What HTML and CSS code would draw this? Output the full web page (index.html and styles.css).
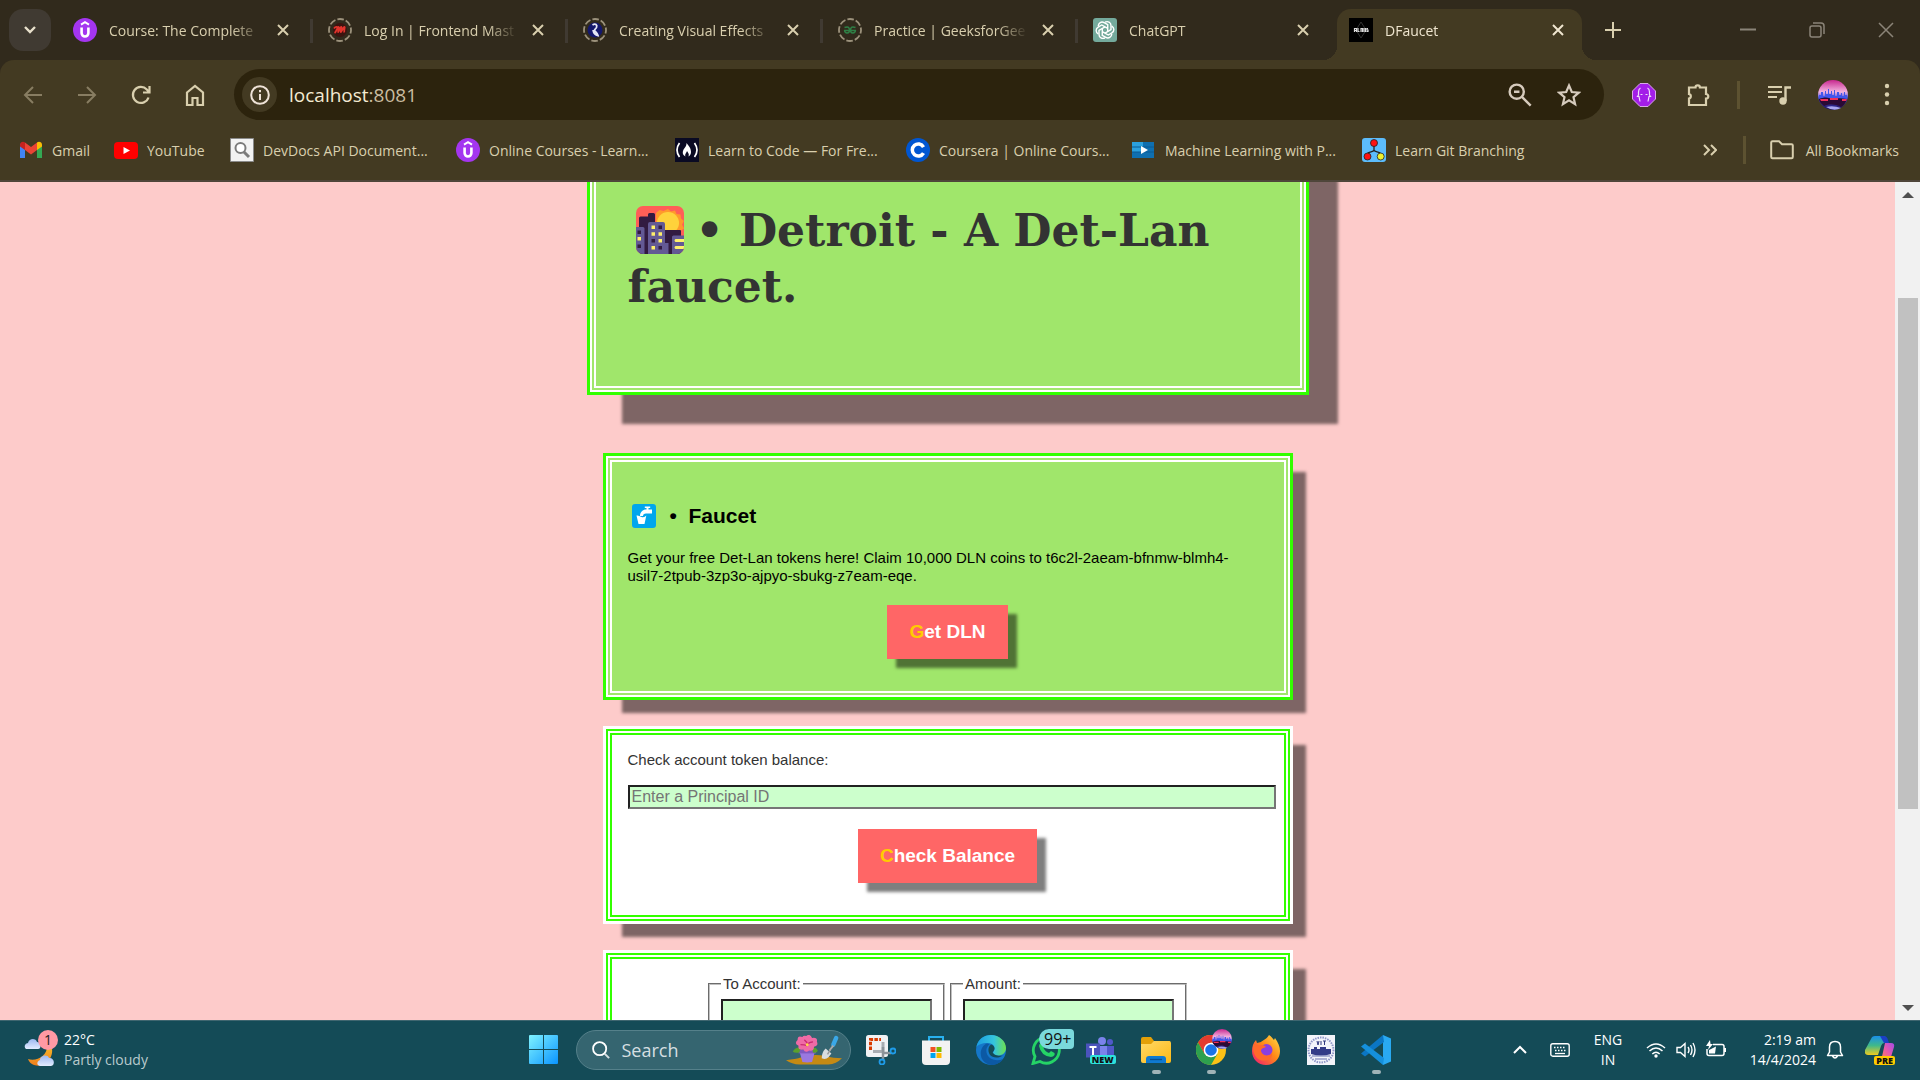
FILE: index.html
```html
<!DOCTYPE html>
<html lang="en">
<head>
<meta charset="utf-8">
<title>DFaucet</title>
<meta name="viewport" content="width=device-width, initial-scale=1">
<link rel="stylesheet" href="styles.css">
</head>
<body>
<svg class="defs" aria-hidden="true">
  <defs>
    <linearGradient id="g-win" x1="0" y1="0" x2="1" y2="1"><stop offset="0" stop-color="#7ff3ff"/><stop offset="1" stop-color="#0a94ff"/></linearGradient>
    <linearGradient id="g-sky" x1="0" y1="0" x2="0" y2="1"><stop offset="0" stop-color="#c8288f"/><stop offset=".4" stop-color="#f3b4e0"/><stop offset=".6" stop-color="#4a4fe0"/><stop offset="1" stop-color="#1a0a50"/></linearGradient>
    <linearGradient id="g-folder" x1="0" y1="0" x2="1" y2="1"><stop offset="0" stop-color="#ffd968"/><stop offset="1" stop-color="#fcb915"/></linearGradient>
    <linearGradient id="g-edge" x1="0" y1="0" x2="1" y2="0"><stop offset="0" stop-color="#1a9be0"/><stop offset=".6" stop-color="#35c5dd"/><stop offset="1" stop-color="#6ee04e"/></linearGradient>
    <linearGradient id="g-fox" x1="1" y1="0" x2="0" y2="1"><stop offset="0" stop-color="#ffe14a"/><stop offset=".45" stop-color="#ff8a16"/><stop offset="1" stop-color="#f0127a"/></linearGradient>
    <linearGradient id="g-cop1" x1="0" y1="0" x2="0" y2="1"><stop offset="0" stop-color="#1a8fe8"/><stop offset=".5" stop-color="#3fb98a"/><stop offset="1" stop-color="#f0cb1e"/></linearGradient>
    <linearGradient id="g-cop2" x1="1" y1="0" x2="0" y2="1"><stop offset="0" stop-color="#a24be8"/><stop offset=".5" stop-color="#e85aa8"/><stop offset="1" stop-color="#ff8a4a"/></linearGradient>
    <linearGradient id="g-moon" x1="0" y1="0" x2="0" y2="1"><stop offset="0" stop-color="#f9c22b"/><stop offset="1" stop-color="#ee7d1c"/></linearGradient>
    <linearGradient id="g-cloud" x1="0" y1="0" x2="0" y2="1"><stop offset="0" stop-color="#9db8f0"/><stop offset="1" stop-color="#e3ecff"/></linearGradient>
    <symbol id="i-udemy" viewBox="0 0 24 24"><circle cx="12" cy="12" r="12" fill="#a435f0"/><path d="M8 6.6 12 4.2l4 2.4" fill="none" stroke="#fff" stroke-width="2"/><path d="M8.6 9.5v5.6a3.4 3.4 0 0 0 6.800 0V9.500" fill="none" stroke="#fff" stroke-width="2.600"/></symbol>
    <symbol id="i-ring" viewBox="0 0 24 24"><circle cx="12" cy="12" r="11" fill="none" stroke="#9c927c" stroke-width="1.800" stroke-dasharray="6.600 2.040" stroke-dashoffset="3"/></symbol>
    <symbol id="i-x" viewBox="0 0 12 12"><path d="m1 1 10 10M11 1 1 11" fill="none" stroke="currentColor" stroke-width="2"/></symbol>
    <symbol id="i-skyline" viewBox="0 0 30 30"><circle cx="15" cy="15" r="15" fill="url(#g-sky)"/><path d="M1 19v-4h2v-3h2v4h2v-5h1v3h2V9h1v5h2v-3h1v4h2v-5h1v6h2v-4h2v3h2v-2h1v3h2v-4h1v3h2v4z" fill="#4256ec"/><path d="M1 19c5-2 9-2 13 0 5-1 10-1 15 0-1 4-4 7-6 8-6-3-11-3-17-1-2-2-5-4-5-7" fill="#2b0a35"/><path d="M2 19h8v2H3zM12 18h8v2h-8zM24 19h5l-1 2h-4z" fill="#f0305a"/><path d="M8 27q7-2 15 1-7 4-15-1" fill="#a9a6f0"/></symbol>
  </defs>
</svg>

<header class="browser">
  <div class="tabstrip">
    <button class="tab-search" aria-label="Search tabs"><svg viewBox="0 0 14 10"><path d="m2 2 5 5 5-5" fill="none" stroke="#e8e0cc" stroke-width="2.400"/></svg></button>
    <ul class="tabs">
      <li class="tab"><svg class="fav"><use href="#i-udemy"/></svg><span class="tab-title">Course: The Complete</span><button class="tab-close" aria-label="Close tab"><svg><use href="#i-x"/></svg></button></li>
      <li class="tab"><svg class="fav" viewBox="0 0 24 24"><use href="#i-ring"/><circle cx="12" cy="12" r="7" fill="#3d1410"/><path d="M6.500 15c2-1 2.500-6 4-6 .8 0-.6 5-.3 5s2-5 3-5-.8 5-.3 5 2.300-5 3.500-5c1 0-1 4 0 5.500M6 10.500c1-1.500 2-2 3.500-1.500" fill="none" stroke="#e2342c" stroke-width="1.800"/></svg><span class="tab-title">Log In | Frontend Mast</span><button class="tab-close" aria-label="Close tab"><svg><use href="#i-x"/></svg></button></li>
      <li class="tab"><svg class="fav" viewBox="0 0 24 24"><use href="#i-ring"/><circle cx="12" cy="12" r="7.500" fill="#14186c"/><path d="M9.500 7c3-2 5 0 4 2.500-.6 1.500-2 1.500-2 3 1 1.500 3 2.500 3.500 5-2.500-.5-4.500-3-5-5.500" fill="none" stroke="#e4e6f5" stroke-width="1.800"/></svg><span class="tab-title">Creating Visual Effects</span><button class="tab-close" aria-label="Close tab"><svg><use href="#i-x"/></svg></button></li>
      <li class="tab"><svg class="fav" viewBox="0 0 24 24"><use href="#i-ring"/><path d="M6 12.500h12M6.500 9.500c4-1.500 5 0 5 3s-4.500 3.500-5 0M17.500 9.500c-4-1.500-5 0-5 3s4.500 3.500 5 0" fill="none" stroke="#2f8046" stroke-width="1.500"/></svg><span class="tab-title">Practice | GeeksforGee</span><button class="tab-close" aria-label="Close tab"><svg><use href="#i-x"/></svg></button></li>
      <li class="tab tab-last"><svg class="fav" viewBox="0 0 24 24"><rect width="24" height="24" rx="3" fill="#74aa9c"/><g fill="none" stroke="#fff" stroke-width="1.400"><path id="petal" d="M12 4.200c2.800-1.500 6 .2 6 3.300v4.200l-6 3.400"/><use href="#petal" transform="rotate(60 12 12)"/><use href="#petal" transform="rotate(120 12 12)"/><use href="#petal" transform="rotate(180 12 12)"/><use href="#petal" transform="rotate(240 12 12)"/><use href="#petal" transform="rotate(300 12 12)"/></g></svg><span class="tab-title">ChatGPT</span><button class="tab-close" aria-label="Close tab"><svg><use href="#i-x"/></svg></button></li>
      <li class="tab tab-active"><svg class="fav" viewBox="0 0 24 24"><path d="M0 0h24v24H0z"/><path d="m12 4 5 8-5 8-5-8z" fill="none" stroke="#333"/><path d="M5.500 14v-3.500h2V14M5.500 12.500h2M9 10v3.500h1.500M12 14v-3.500h1.500V14M15 14v-4M16.500 14v-4M19 10.500h-1V12h1v1.500h-1.500" stroke="#ddd" stroke-width="1.200" fill="none"/></svg><span class="tab-title">DFaucet</span><button class="tab-close" aria-label="Close tab"><svg><use href="#i-x"/></svg></button></li>
    </ul>
    <button class="new-tab" aria-label="New tab"><svg viewBox="0 0 16 16"><path d="M8 0v16M0 8h16" stroke="#d9cfae" stroke-width="2"/></svg></button>
    <div class="window-controls">
      <button aria-label="Minimize"><svg viewBox="0 0 16 16"><path d="M0 7.500h16" stroke="currentColor" stroke-width="2"/></svg></button>
      <button aria-label="Restore"><svg viewBox="0 0 16 16"><rect x="1" y="4" width="11" height="11" rx="2" fill="none" stroke="currentColor" stroke-width="1.500"/><path d="M4 1h8a3 3 0 0 1 3 3v8" fill="none" stroke="currentColor" stroke-width="1.500"/></svg></button>
      <button aria-label="Close"><svg viewBox="0 0 16 16"><path d="m1 1 14 14M15 1 1 15" stroke="currentColor" stroke-width="1.500"/></svg></button>
    </div>
  </div>

  <div class="toolbar">
    <button class="tool dim" aria-label="Back"><svg viewBox="0 0 20 20"><path d="M19 10H2M10 2l-8 8 8 8" fill="none" stroke="currentColor" stroke-width="2"/></svg></button>
    <button class="tool dim" aria-label="Forward"><svg viewBox="0 0 20 20"><path d="M1 10h17M10 2l8 8-8 8" fill="none" stroke="currentColor" stroke-width="2"/></svg></button>
    <button class="tool" aria-label="Reload"><svg viewBox="0 0 20 20"><path d="M17.500 12.500A8 8 0 1 1 15.800 4.500L18 7M18.500 1v6.500H12" fill="none" stroke="currentColor" stroke-width="2.200"/></svg></button>
    <button class="tool" aria-label="Home"><svg viewBox="0 0 20 22"><path d="M2 8.500 10 2l8 6.500V21h-5.500v-7h-5v7H2z" fill="none" stroke="currentColor" stroke-width="2.200"/></svg></button>
    <div class="omnibox">
      <button class="site-info" aria-label="View site information"><svg viewBox="0 0 20 20"><circle cx="10" cy="10" r="8.800" fill="none" stroke="currentColor" stroke-width="2"/><path d="M10 9v6M10 5v2.200" stroke="currentColor" stroke-width="2"/></svg></button>
      <span class="address"><span class="host">localhost</span>:8081</span>
      <button class="omni-icon" aria-label="Zoom"><svg viewBox="0 0 22 22"><circle cx="8" cy="8" r="6.500" fill="none" stroke="currentColor" stroke-width="2.200"/><path d="m12.800 12.800 8 8M5.500 8h5" stroke="currentColor" stroke-width="2.200"/></svg></button>
      <button class="omni-icon" aria-label="Bookmark this tab"><svg viewBox="0 0 24 24"><path d="m12 2.500 2.800 6.500 7 .6-5.300 4.600 1.600 6.900-6.100-3.700-6.100 3.700 1.600-6.900L2.200 9.600l7-.6z" fill="none" stroke="currentColor" stroke-width="2.200"/></svg></button>
    </div>
    <button class="tool tool-first" aria-label="Extension"><svg viewBox="0 0 24 24"><path d="M8 .5h8L23.500 8v8L16 23.500H8L.5 16V8z" fill="#a31de8" stroke="#d9a6e8"/><path d="M8.500 5q-2 1-2 4v3l-1 1.500h1.500l1 5M15.500 5q2 1 2 4v3l1 1.500H17l-1 5M8.500 11.500h2M13.500 11.500h2" fill="none" stroke="#f0dcfa" stroke-width="1.200"/></svg></button>
    <button class="tool" aria-label="Extensions"><svg viewBox="0 0 24 24"><path d="M3 4.500h6.500a2.200 2.200 0 0 1 4.400 0H20V11a2.300 2.300 0 0 1 0 4.600V22H3v-6.500a2.300 2.300 0 0 0 0-4.500z" fill="none" stroke="currentColor" stroke-width="2.200"/></svg></button>
    <span class="tool-divider"></span>
    <button class="tool" aria-label="Media controls"><svg viewBox="0 0 24 24"><path d="M1 4h14M1 9h14M1 14h9" stroke="currentColor" stroke-width="2.200"/><path d="M18.500 18V4.500H24" fill="none" stroke="currentColor" stroke-width="2.400"/><circle cx="16" cy="18" r="3.700" fill="currentColor"/></svg></button>
    <button class="tool avatar" aria-label="Profile"><svg><use href="#i-skyline"/></svg></button>
    <button class="tool" aria-label="Menu"><svg viewBox="0 0 24 24" fill="currentColor"><circle cx="12" cy="3" r="2.200"/><circle cx="12" cy="11.500" r="2.200"/><circle cx="12" cy="20" r="2.200"/></svg></button>
  </div>

  <nav class="bookmarks" aria-label="Bookmarks">
    <div class="bookmark-grid">
      <a href="#"><svg class="fav" viewBox="0 0 24 24"><path d="M1 5.500V20h5v-9z" fill="#4285f4"/><path d="M23 5.500V20h-5v-9z" fill="#34a853"/><path d="M1 7c0-3 3-4 5-2.500V12L1 8.500z" fill="#c5221f"/><path d="M23 7c0-3-3-4-5-2.500V12l5-3.500z" fill="#fbbc04"/><path d="M6 4.500 12 9l6-4.500V12l-6 4.500L6 12z" fill="#ea4335"/></svg>Gmail</a>
      <a href="#"><svg class="fav" viewBox="0 0 24 24"><rect y="4" width="24" height="17" rx="4" fill="#f00"/><path d="m9.500 9 6.500 3.500L9.500 16z" fill="#fff"/></svg>YouTube</a>
      <a href="#"><svg class="fav" viewBox="0 0 24 24"><path d="M.5.5h23v23H.5z" fill="#f2f2f2" stroke="#8a8a8a"/><circle cx="10.500" cy="10" r="5" fill="#fff" stroke="#7b7b7b" stroke-width="2"/><path d="m14 14 5 5" stroke="#7b7b7b" stroke-width="3"/></svg>DevDocs API Document...</a>
      <a href="#"><svg class="fav"><use href="#i-udemy"/></svg>Online Courses - Learn...</a>
      <a href="#"><svg class="fav" viewBox="0 0 24 24"><path d="M0 0h24v24H0z" fill="#0a0a23"/><path d="M4.500 5q-5 7 0 14M19.500 5q5 7 0 14" fill="none" stroke="#fff" stroke-width="1.700"/><path d="M11.500 5c2 2.500 4.500 5 4.500 9 0 2-1 3.500-2.500 4.500 1-2.500-.5-3.500-1.500-5.500-.5 2-2.500 3-1.500 5.500C6 16 8 12 10 9.500c1-1.500 1.500-2.500 1.500-4.500" fill="#fff"/></svg>Learn to Code — For Fre...</a>
      <a href="#"><svg class="fav" viewBox="0 0 24 24"><circle cx="12" cy="12" r="12" fill="#0056d2"/><path d="M17.500 9a6 6 0 1 0 0 6" fill="none" stroke="#fff" stroke-width="3.500"/></svg>Coursera | Online Cours...</a>
      <a href="#"><svg class="fav" viewBox="0 0 24 24"><path d="M0 4h22v16H0z" fill="#0f6fb0"/><path d="M0 4h11v10H0z" fill="#2ba0dd"/><path d="M0 9h22M0 14h22" stroke="#0b5a94"/><path d="m9 8 7 4-7 4z" fill="#fff"/></svg>Machine Learning with P...</a>
      <a href="#"><svg class="fav" viewBox="0 0 24 24"><rect width="24" height="24" rx="3" fill="#5cbcfc"/><path d="M12 8v4M5.500 16c0-3 6.500-1.500 6.500-4 0 2.500 6.500 1 6.500 4" fill="none" stroke="#222" stroke-width="1.300"/><circle cx="12" cy="5" r="3.500" fill="#f11" stroke="#222" stroke-width=".8"/><circle cx="5.500" cy="18.500" r="3.500" fill="#f11" stroke="#222" stroke-width=".8"/><circle cx="18.700" cy="18.500" r="3.500" fill="#eef02c" stroke="#222" stroke-width=".8"/></svg>Learn Git Branching</a>
    </div>
    <button class="more" aria-label="More bookmarks"><svg viewBox="0 0 14 12"><path d="m1 1 5 5-5 5M8 1l5 5-5 5" fill="none" stroke="currentColor" stroke-width="2"/></svg></button>
    <span class="tool-divider"></span>
    <a class="all-bookmarks" href="#"><svg class="fav" viewBox="0 0 24 24"><path d="M1.200 4.500q0-1.300 1.300-1.300H9l3 3h9.500q1.300 0 1.300 1.300v11.500q0 1.300-1.300 1.300h-19q-1.300 0-1.300-1.300z" fill="none" stroke="currentColor" stroke-width="2"/></svg>All Bookmarks</a>
  </nav>
</header>

<div class="viewport">
  <main class="page">
    <header class="hero">
      <h1><svg class="hero-icon" viewBox="0 0 48 48"><defs><clipPath id="city"><rect width="48" height="48" rx="7"/></clipPath></defs><g clip-path="url(#city)"><path d="M0 0h48v48H0z" fill="#ff5f57"/><path d="m32 3 3 2.500 4-1 1.500 3.500 4 .5.500 4 3 2.500-2 3.500 2 4-3 2H20V7l3.500-3 4 1z" fill="#ff9a2b"/><circle cx="32" cy="17" r="11" fill="#ffd23b"/><path d="M3 12q0-1.500 1.500-1.500H12V8.500q0-1.500 1.500-1.500h4q1.500 0 1.500 1.500V48H3z" fill="#321b41"/><path d="M28 25q0-1 1-1h15q1 0 1 1v23H28z" fill="#321b41"/><path d="M0 21h7q1.500 0 1.500 1.500V48H0zM12 18q0-2 2-2h13q2 0 2 2v19h3.500v11H12zM36 31q0-1.500 1.500-1.500H48V48H36z" fill="#635994"/><path d="M15.500 19.500h3.500V23h-3.500zM15.500 26.300h3.500v3.500h-3.500zM22.500 26.300H26v3.500h-3.500zM22.500 33H26v3.500h-3.500zM15.500 40h3.500v3.500h-3.500zM1.500 31H5v3.500H1.500zM39.500 33H48v3h-8.500q-2-1.500 0-3zM39.500 40H48v3h-8.500q-2-1.500 0-3z" fill="#ffef6b"/><path d="M22.500 19.500H26V23h-3.500zM15.500 33h3.500v3.500h-3.500zM22.500 40H26v3.500h-3.500zM1.500 24.500H5V28H1.500zM1.500 38.500H5V42H1.500z" fill="#321b41"/></g></svg>• Detroit - A Det-Lan faucet.</h1>
    </header>

    <section class="card card-green">
      <h2><svg class="title-icon" viewBox="0 0 24 24"><rect width="24" height="24" rx="3" fill="#00a6ed"/><path d="M8 12c0-4 3-6.500 6-6.500h.5V4h-1.700V2.500h5.400V4h-1.700v1.500H20v4h-6q-3 0-3 2.500z" fill="#fff"/><path d="m4.500 11.500 2 8.500h6l1.800-8.500q-2 2.500-4.800 1.500-3-2-5-1.500" fill="#fff"/></svg>•&nbsp; Faucet</h2>
      <p>Get your free Det-Lan tokens here! Claim 10,000 DLN coins to t6c2l-2aeam-bfnmw-blmh4-usil7-2tpub-3zp3o-ajpyo-sbukg-z7eam-eqe.</p>
      <button class="action">Get DLN</button>
    </section>

    <section class="card card-white">
      <label for="principal">Check account token balance:</label>
      <input id="principal" class="field" type="text" placeholder="Enter a Principal ID">
      <button class="action">Check Balance</button>
    </section>

    <section class="card card-white transfer">
      <div class="pair">
        <fieldset><legend><label for="to">To Account:</label></legend><input id="to" class="field" type="text"></fieldset>
        <fieldset><legend><label for="amount">Amount:</label></legend><input id="amount" class="field" type="text"></fieldset>
      </div>
    </section>
  </main>
  <div class="scrollbar" aria-hidden="true">
    <span class="arrow arrow-up"></span>
    <span class="thumb"></span>
    <span class="arrow arrow-down"></span>
  </div>
</div>

<footer class="taskbar">
  <button class="weather">
    <svg viewBox="0 0 34 38"><path d="M2 18c-3-3 0-6 2-6 1-5 8-5 9-1 4 0 5 7 1 7z" fill="url(#g-cloud)"/><path d="M26 12c7 12-4 26-16 22-3-1-5-3-6-6 8 3 20-3 19-14z" fill="url(#g-moon)"/><path d="M16 35c-4-1-3-5 0-6 0-5 8-6 9-2 5-1 7 7 2 8z" fill="url(#g-cloud)"/><circle cx="24" cy="9" r="10" fill="#ff99a4"/><text x="24" y="14" class="badge-num">1</text></svg>
    <span class="weather-text"><span>22°C</span><span class="soft">Partly cloudy</span></span>
  </button>

  <div class="apps">
    <button class="app" aria-label="Start"><svg viewBox="0 0 30 30"><path d="M0 1q0-1 1-1h13v14H0zM15 0h13q1 0 1 1v13H15zM0 15h14v14H1q-1 0-1-1zM15 15h14v13q0 1-1 1H15z" fill="url(#g-win)"/></svg></button>
    <button class="search">
      <svg class="lens" viewBox="0 0 20 20"><circle cx="8.500" cy="8.500" r="7.300" fill="none" stroke="#fff" stroke-width="2"/><path d="m14 14 5 5" stroke="#d5dfe2" stroke-width="2.200"/></svg>
      <span>Search</span>
      <svg class="flower" viewBox="0 0 58 32"><path d="M0 26q10-1 16-3 13-4 25-1 8 2 17 2-6 6-14 6.500H14Q6 30 0 26" fill="#c58a14"/><path d="M14 17h16l-3 11q-5 1-10 0z" fill="#9a78e0"/><path d="M13 15h18v4H13z" fill="#7e58c0"/><path d="M14 18q-5 1-7-1 3-5 8-4zM28 18q4 1 5-2-2-4-6-3z" fill="#5aa02c"/><path d="M21 1q4-3 6 2 6-1 5 4 2 4-3 5 0 5-5 4-4 3-6-1-6 1-5-4-5-2-1-6 0-5 5-3 1-2 4-1" fill="#f06ba6"/><path d="M19 5q3 2 3 5 2-3 6-3M15 10q4 0 7 1" stroke="#c92a72" fill="none" stroke-width="1.300"/><circle cx="22" cy="10" r="1.500" fill="#ffd84a"/><path d="m41 14 6 5-3 4q-3 3-7 1 0-6 4-10" fill="#d9dde0"/><path d="m46 15-3 5" stroke="#999" stroke-width="1.500"/><path d="m49 10 3-7" stroke="#3aa8e8" stroke-width="4.500" stroke-linecap="round"/><path d="m45 16 4-5" stroke="#aaa" stroke-width="2"/></svg>
    </button>
    <button class="app" aria-label="Snipping Tool"><svg viewBox="0 0 30 30"><rect width="22" height="22" rx="2.500" fill="#f1f2f4"/><path d="M4.500 15V4.500H15" fill="none" stroke="#d83b01" stroke-width="3" stroke-dasharray="3.500 1.300"/><path d="M7 16.500h10V7" fill="none" stroke="#a9adb2" stroke-width="3"/><path d="M17 12v13M16 18h9" stroke="#8d9399" stroke-width="2.500"/><circle cx="27" cy="16" r="2.500" fill="none" stroke="#1f9be8" stroke-width="1.800"/><circle cx="16" cy="27" r="2.500" fill="none" stroke="#1f9be8" stroke-width="1.800"/></svg></button>
    <button class="app" aria-label="Microsoft Store"><svg viewBox="0 0 30 30"><path d="M8 7V2h14v5" fill="none" stroke="#28b0ee" stroke-width="2"/><path d="M1 5.500h28V26q0 4-4 4H5q-4 0-4-4z" fill="#f2f2f2"/><path d="M9.500 12h5v5h-5z" fill="#f25022"/><path d="M15.500 12h5v5h-5z" fill="#7fba00"/><path d="M9.500 18h5v5h-5z" fill="#00a4ef"/><path d="M15.500 18h5v5h-5z" fill="#ffb900"/></svg></button>
    <button class="app" aria-label="Edge"><svg viewBox="0 0 30 30"><circle cx="15" cy="15" r="15" fill="#1577c9"/><path d="M.3 12C2 4 8 0 15 0c8 0 15 6 15 13 0 5-4 7.500-8 7.500-3 0-5-1-5-2.500 0-1 1.500-2 1.500-4.500C18.500 9.500 15 8 11 8 6 8 2 10 .3 12" fill="url(#g-edge)"/><path d="M11 8.500C3 11 1 27 15 30c5 .3 10-2.500 12-6-8 3.500-18-1-16.500-10 .5-2 1.500-3.500 3-4.500-1-.7-1.700-1-2.500-1" fill="#0c59a4"/><path d="M17 18c-1-1 1.500-2 1.500-4.500 0-2-1.500-3.500-3.500-4-4 3-3 10 1 12 4 2 8 1 11-1-2 .5-7 1-10-2.500" fill="#144b57"/></svg></button>
    <button class="app" aria-label="WhatsApp"><svg viewBox="0 0 30 30"><path d="M2 28.500 4 21.500a13 13 0 1 1 5 5z" fill="none" stroke="#25d366" stroke-width="2.800"/><path d="M10 8q2-1.500 3 1l1 2-1.500 2q2 4 5.500 5l2-2 3.500 2q1 3-3.500 4-10-1-12-11 0-2 2-3" fill="#25d366"/></svg><span class="badge">99+</span></button>
    <button class="app" aria-label="Teams"><svg viewBox="0 0 30 30"><circle cx="16" cy="6" r="4" fill="#7b83eb"/><circle cx="24" cy="7" r="3" fill="#5059c9"/><path d="M20 11h8v8q0 4-4 4h-4z" fill="#5059c9"/><path d="M9 11h12v11q-2 5-7 5-5-1-5-5z" fill="#7b83eb"/><path d="M0 8.500h14v14H0z" fill="#4b53bc"/><path d="M3.500 12h7M7 12v8" stroke="#fff" stroke-width="2"/></svg><span class="tag tag-new">NEW</span></button>
    <button class="app running" aria-label="File Explorer"><svg viewBox="0 0 30 30"><path d="M0 4q0-2 2-2h8l3 4h16v8H0z" fill="#e3a008"/><path d="M0 9h10l3-3h15q2 0 2 2v18q0 2-2 2H2q-2 0-2-2z" fill="url(#g-folder)"/><path d="M5 28v-4q0-3 3-3h14q3 0 3 3v4z" fill="#0f7ad1"/><path d="M9 24.500h12" stroke="#0a4f90" stroke-width="1.300"/></svg></button>
    <button class="app running" aria-label="Chrome"><svg viewBox="0 0 30 30"><circle cx="15" cy="15" r="15" fill="#fbc116"/><path d="M2 7.500A15 15 0 0 1 28 7.500H15L8.500 19z" fill="#e33b2e"/><path d="M2 7.500A15 15 0 0 0 15 30l6.500-11.300H8.500z" fill="#2da04e"/><circle cx="15" cy="15" r="7.300" fill="#fff"/><circle cx="15" cy="15" r="5.800" fill="#1a73e8"/></svg><svg class="profile"><use href="#i-skyline"/></svg></button>
    <button class="app" aria-label="Firefox"><svg viewBox="0 0 30 30"><path d="M18 0c3 2 4 4 5 5l1-2c3 4 5 9 5 13 0 8-6 14-14 14S1 24 1 16C1 12 2 8 5 5l1 3 4-1c2-2 6-3 8-7" fill="url(#g-fox)"/><circle cx="15.500" cy="15" r="6" fill="#8a3fe0"/><path d="M2 10c4-1 5 1 9 0 2 0 3 1 4 2-2 1-5 1-5 4 1 5 8 6 11 2 1 6-6 9-12 7-6-3-7-9-7-15" fill="#ff6a2a"/></svg></button>
    <button class="app" aria-label="College portal"><svg viewBox="0 0 30 30"><path d="M1 0h28v30H1z" fill="#f3f4fa"/><circle cx="15" cy="15" r="12.500" fill="none" stroke="#8f96c8" stroke-width="2" stroke-dasharray="1.500 1"/><path d="M11 6l1 4 1-4M15 6v4M17 6h3M18.500 6v4" stroke="#30387f" fill="none"/><path d="M5 14h3v-2h3v2h3v-2h6v2h5v5q-10 3-20 0z" fill="#333b88"/><path d="M6 21h18M9 24h12" stroke="#6870b0"/></svg></button>
    <button class="app running" aria-label="Visual Studio Code"><svg viewBox="0 0 30 30"><path d="m22 0 8 3.500v23L22 30z" fill="#29a9f2"/><path d="m22 0 1 7L4 21.500 0 18.500z" fill="#0b76c4"/><path d="m22 30 1-7L4 8.500 0 11.500z" fill="#1590dc"/></svg></button>
  </div>

  <div class="tray">
    <svg class="chev" viewBox="0 0 14 14"><path d="m1 10 6-6 6 6" fill="none" stroke="#fff" stroke-width="2"/></svg>
    <svg class="kbd" viewBox="0 0 20 16"><rect x=".8" y="1.800" width="18.400" height="12.400" rx="2" fill="none" stroke="#fff" stroke-width="1.400"/><path d="M4 5.500h12M5 8.500h11" stroke="#fff" stroke-width="1.500" stroke-dasharray="1.500 1.500"/><path d="M5 11.500h10" stroke="#fff" stroke-width="1.300"/></svg>
    <span class="lang"><span>ENG</span><span>IN</span></span>
    <span class="status">
      <svg viewBox="0 0 20 20"><path d="M1 8q9-8 18 0M3.500 11q6.500-6 13 0M6.300 14q3.700-3.500 7.400 0" fill="none" stroke="#fff" stroke-width="1.500"/><circle cx="10" cy="16" r="1.700" fill="#fff"/></svg>
      <svg viewBox="0 0 20 20"><path d="M1 7.500h3.500L9 3.500v13L4.500 12.500H1z" fill="none" stroke="#fff" stroke-width="1.400"/><path d="M12 7q2 3 0 6M14.500 5q3 5 0 10M17 3q4 7 0 14" fill="none" stroke="#fff" stroke-width="1.400"/></svg>
      <svg viewBox="0 0 20 20"><path d="M7 4.500h9q2 0 2 2v7q0 2-2 2H3q-2 0-2-2V9" fill="none" stroke="#fff" stroke-width="1.500"/><path d="M3 13.500V10l7-3.500-1 7zM18 8h2v4h-2zM4 0 0 6h3L2 10l5-6H4.500z" fill="#fff"/></svg>
    </span>
    <span class="clock"><span>2:19 am</span><span>14/4/2024</span></span>
    <svg class="bell" viewBox="0 0 18 20"><path d="M1.500 15.500 3.500 12V7q0-5.500 5.500-5.500T14.500 7v5l2 3.500zM6.500 16q2.500 4 5 0" fill="none" stroke="#fff" stroke-width="1.500" stroke-linejoin="round"/></svg>
    <span class="copilot"><svg viewBox="0 0 30 30"><path d="M6 4q1-3 4-3h8q3 0 4 4l1 3h-4q-2 0-3 3l-3 9H3q-4 0-3-5z" fill="url(#g-cop1)"/><path d="M15 1h4q3 0 4 4l1 3h-5z" fill="#1b3fc4"/><path d="M20 8h6q4 0 3 4l-3 10q-1 4-4 4h-6z" fill="url(#g-cop2)"/></svg><span class="tag tag-pre">PRE</span></span>
  </div>
</footer>
</body>
</html>
```
FILE: styles.css
```css
* { box-sizing: border-box; }

body {
  margin: 0;
  height: 100vh;
  display: flex;
  flex-direction: column;
  overflow: hidden;
  font-family: "Open Sans", "Noto Sans", sans-serif;
  font-size: 14px;
}

button {
  border: 0;
  padding: 0;
  background: none;
  color: inherit;
  font: inherit;
}

a { color: inherit; text-decoration: none; }
svg { display: block; flex: none; }
.defs { position: absolute; width: 0; height: 0; }
.fav { width: 24px; height: 24px; }

/* Browser frame */
.browser {
  flex: none;
  background: #312a1c;
  color: #d9cfae;
  border-bottom: 2px solid #4f463a;
}

.tabstrip {
  display: flex;
  align-items: center;
  height: 60px;
  padding-left: 9px;
}

.tab-search {
  display: grid;
  place-items: center;
  flex: none;
  width: 42px;
  height: 42px;
  border-radius: 14px;
  background: #403a32;
}
.tab-search svg { width: 14px; height: 10px; }

.tabs {
  display: flex;
  flex: 0 1 1530px;
  min-width: 0;
  margin: 0 0 0 6px;
  padding: 0;
  list-style: none;
}

.tab {
  position: relative;
  display: flex;
  flex: 0 1 255px;
  align-items: center;
  min-width: 0;
  height: 60px;
  padding: 0 17px 0 16px;
}
.tab::after {
  content: "";
  position: absolute;
  right: -1px;
  top: 19px;
  width: 3px;
  height: 24px;
  background: #403a32;
}
.tab-last::after { display: none; }

.tab-title {
  flex: 1;
  min-width: 0;
  margin: 0 8px 0 12px;
  overflow: hidden;
  white-space: nowrap;
  mask-image: linear-gradient(90deg, #000 80%, transparent);
}

.tab-close {
  display: grid;
  place-items: center;
  width: 24px;
  height: 24px;
}
.tab-close svg { width: 12px; height: 12px; }

.tab-active {
  flex-basis: 245px;
  height: 51px;
  margin: 9px 5px 0;
  padding: 0 12px 9px;
  border-radius: 14px 14px 0 0;
  background: #433a22;
  color: #efe5cf;
}
.tab-active::before,
.tab-active::after {
  content: "";
  display: block;
  position: absolute;
  top: auto;
  bottom: 0;
  width: 14px;
  height: 14px;
}
.tab-active::before {
  left: -14px;
  background: radial-gradient(circle at 0 0, transparent 14px, #433a22 14px);
}
.tab-active::after {
  right: -14px;
  background: radial-gradient(circle at 100% 0, transparent 14px, #433a22 14px);
}

.new-tab { display: grid; place-items: center; width: 52px; height: 52px; }
.new-tab svg { width: 16px; height: 16px; }

.window-controls { display: flex; margin-left: auto; color: #8b8478; }
.window-controls button { display: grid; place-items: center; width: 69px; height: 58px; }
.window-controls svg { width: 16px; height: 16px; }

.toolbar {
  display: flex;
  align-items: center;
  height: 69px;
  padding: 0 6px;
  border-radius: 14px 14px 0 0;
  background: #433a22;
}
.tool { display: grid; place-items: center; flex: none; width: 54px; height: 44px; }
.tool svg { width: 20px; height: 22px; }
.tool-first { margin-left: 13px; }
.tool-first svg, .tool-first ~ .tool svg { width: 24px; height: 24px; }
.toolbar .avatar svg { width: 30px; height: 30px; }
.dim { color: #887d62; }
.tool-divider { flex: none; width: 3px; height: 28px; margin: 0 12px; background: #5d5231; }

.omnibox {
  display: flex;
  flex: 1;
  align-items: center;
  min-width: 0;
  height: 51px;
  margin-left: 12px;
  padding: 0 23px 0 8px;
  border-radius: 26px;
  background: #2c230d;
  color: #d6cbbd;
}
.site-info {
  display: grid;
  place-items: center;
  width: 35px;
  height: 35px;
  border-radius: 50%;
  background: #433a22;
  color: #efe3d8;
}
.site-info svg { width: 20px; height: 20px; }
.address { flex: 1; margin-left: 12px; font-size: 19px; color: #c9bca0; }
.host { color: #f3ead2; }
.omni-icon { display: grid; place-items: center; margin-left: 25px; }
.omni-icon svg { width: 24px; height: 24px; }

.bookmarks {
  display: flex;
  align-items: center;
  height: 51px;
  padding: 0 21px 9px 19px;
  background: #433a22;
  white-space: nowrap;
}
.bookmarks a { display: flex; align-items: center; gap: 9px; }
.bookmark-grid {
  display: grid;
  flex: 1;
  grid-template-columns: 95px 116px 226px 219px 231px 226px 230px auto;
  min-width: 0;
}
.more { margin-right: 14px; }
.more svg { width: 14px; height: 12px; }
.bookmarks .all-bookmarks { gap: 12px; margin-left: 12px; }

/* Page */
.viewport {
  display: flex;
  flex: 1;
  min-height: 0;
  overflow: hidden;
  background: #fdcbca;
  font-family: "Liberation Sans", Arial, sans-serif;
}

.page {
  flex: 1;
  margin-top: -40px;
  color: #333;
  font-size: 15px;
  line-height: 18px;
}

.hero {
  width: 716px;
  margin: 0 auto 64px;
  padding: 55px 32px 71px;
  border: 6px double #fff;
  outline: 3px solid #3f0;
  background: #a0e66b;
  box-shadow: 32px 32px 3px rgba(0, 0, 0, .5);
}
.hero h1 {
  margin: 0;
  font: bold 44px/56px Georgia, "DejaVu Serif", serif;
}
.hero-icon {
  display: inline-block;
  width: 48px;
  height: 48px;
  margin: 0 12px 0 8px;
  vertical-align: -8px;
}

.card {
  display: flex;
  flex-direction: column;
  align-items: flex-start;
  width: 684px;
  margin: 0 auto 32px;
  padding: 16px;
  border: 6px double;
  box-shadow: 16px 16px 3px rgba(0, 0, 0, .5);
}
.card-green {
  border-color: #fff;
  outline: 3px solid #3f0;
  background: #a0e66b;
  color: #000;
}
.card-white {
  border-color: #3f0;
  outline: 3px solid #fff;
  background: #fff;
}
.card h2 {
  display: flex;
  align-items: center;
  margin: 24px 0 19px;
  font-size: 21px;
  line-height: 28px;
}
.title-icon { width: 24px; height: 24px; margin: 0 14px 0 4px; }
.card p { margin: 0; padding-right: 16px; }

.action {
  align-self: center;
  height: 54px;
  margin: 20px 0 16px;
  padding: 0 22px;
  background: #f66;
  box-shadow: 9px 9px 3px rgba(0, 0, 0, .5);
  color: #fff;
  font-size: 19px;
  font-weight: bold;
}
.action::first-letter { color: #fc0; }

.field {
  box-sizing: content-box;
  width: 100%;
  height: 18px;
  margin: 16px 0 0;
  padding: 1px 2px;
  border: 2px inset #767676;
  background: #cfc;
  font: 16px/18px "Liberation Sans", Arial, sans-serif;
}
.field::placeholder { color: #757575; }

.pair { display: flex; align-self: center; gap: 5px; }
.pair fieldset {
  margin: 0;
  padding: 6px 11px 12px;
  border: 2px groove #c0c0c0;
}
.pair legend { padding: 0 2px; }
.pair .field { width: 203px; height: 36px; margin: 0; }

.scrollbar {
  display: flex;
  flex-direction: column;
  align-items: center;
  width: 25px;
  background: #f1f1f1;
}
.arrow { height: 25px; }
.arrow::before {
  content: "";
  display: block;
  margin-top: 10px;
  border: 6px solid transparent;
}
.arrow-up::before { margin-top: 4px; border-bottom-color: #505050; }
.arrow-down::before { border-top-color: #505050; }
.thumb { flex: 511; width: 20px; background: #c1c1c1; }
.arrow-up { margin-bottom: 91px; }
.arrow-down { margin-top: 186px; }

/* Taskbar */
.taskbar {
  display: grid;
  grid-template-columns: 1fr auto 1fr;
  flex: none;
  align-items: center;
  height: 60px;
  border-top: 1px solid #3f6670;
  background: #144b57;
  color: #fff;
}

.weather {
  display: flex;
  align-items: center;
  gap: 6px;
  padding: 0 0 2px 24px;
  text-align: left;
  line-height: 20px;
}
.weather svg { width: 34px; height: 38px; overflow: visible; }
.weather-text { display: flex; flex-direction: column; }
.soft { color: #b9cacd; }
.badge-num { fill: #222; font-size: 14px; text-anchor: middle; }

.apps { display: flex; align-items: center; padding-bottom: 1px; }
.app {
  position: relative;
  display: grid;
  place-items: center;
  width: 55px;
  height: 58px;
}
.app > svg { width: 30px; height: 30px; }
.running::after {
  content: "";
  position: absolute;
  left: 23px;
  bottom: 5px;
  width: 9px;
  height: 4px;
  border-radius: 2px;
  background: #9fb3b7;
}
.app > .profile { position: absolute; top: 8px; right: 7px; width: 20px; height: 20px; }
.badge {
  position: absolute;
  top: 8px;
  right: 0;
  padding: 0 2px 0 5px;
  border-radius: 10px 4px 4px 10px;
  background: #7ad9dc;
  color: #111;
  font-size: 16px;
  line-height: 20px;
}
.tag {
  position: absolute;
  padding: 0 2px;
  border-radius: 2px;
  color: #111;
  font-size: 9px;
  font-weight: 800;
  line-height: 9px;
}
.tag-new { right: 13px; bottom: 15px; background: #2de2dc; }
.tag-pre { right: 0; bottom: 0; background: #fc0; }

.search {
  display: flex;
  align-items: center;
  width: 275px;
  height: 40px;
  margin: 0 3px 0 4px;
  padding: 0 8px 0 15px;
  border: 1px solid #55808a;
  border-radius: 20px;
  background: #356570;
  color: #d5dfe2;
  font-size: 18px;
}
.search span { flex: 1; margin-left: 12px; text-align: left; }
.lens { width: 18px; height: 18px; }
.flower { width: 56px; height: 31px; }

.tray {
  display: flex;
  align-items: center;
  justify-content: flex-end;
  padding: 0 25px 2px 0;
  line-height: 20px;
}
.chev { width: 14px; height: 14px; margin-right: 23px; }
.kbd { width: 20px; height: 16px; margin-right: 22px; }
.lang { display: flex; flex-direction: column; align-items: center; width: 32px; }
.status { display: flex; gap: 10px; margin: 0 20px 0 22px; }
.status svg { width: 20px; height: 20px; }
.clock { display: flex; flex-direction: column; align-items: flex-end; width: 70px; }
.bell { width: 18px; height: 20px; margin: 0 21px 0 10px; }
.copilot { position: relative; }
.copilot svg { width: 30px; height: 30px; }
```
